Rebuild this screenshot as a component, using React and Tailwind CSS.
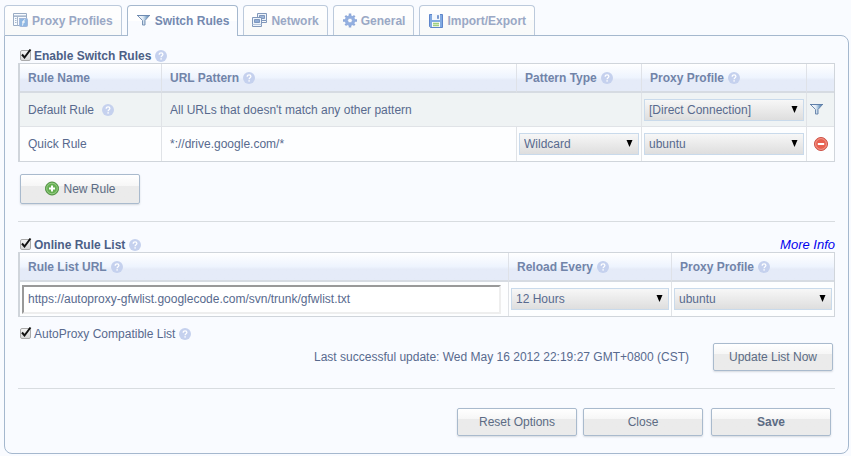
import { useState } from "react";

function HelpIcon() {
  return (
    <svg className="block size-3 shrink-0" viewBox="0 0 12 12" aria-label="Help" role="img">
      <circle cx="6" cy="6" r="6" fill="#c5d1ee" />
      <path d="M4.2 4.7C4.2 3.4 5 2.8 6.1 2.8S7.9 3.5 7.9 4.5C7.9 5.7 6.1 5.7 6.1 7.2" fill="none" stroke="#fff" strokeWidth="1.3" />
      <rect x="5.4" y="8.2" width="1.4" height="1.4" fill="#fff" />
    </svg>
  );
}

function ProfilesIcon() {
  return (
    <svg className="size-4 shrink-0" viewBox="0 0 16 16" aria-hidden="true">
      <path d="M.5 .5h13v12H.5z" fill="#f8fbff" stroke="#9aacc4" />
      <path d="M1 2.5h12" stroke="#c3cfdf" />
      <path d="M1 3.5h12M4.5 4v8.5M2 5.5h1.5M2 7.5h1.5M2 9.5h1.5M6 5.500h6" stroke="#a9b8cc" fill="none" />
      <rect x="6.500" y="5.500" width="8" height="8" rx="1" fill="#8fb7e2" stroke="#a3b8dc" />
      <path d="M12.200 6.800c-2.200-.2-1.700 2-2.700 5.700M9 9h3" stroke="#fff" fill="none" />
    </svg>
  );
}

function FunnelIcon({ dim }) {
  return (
    <svg className={"size-4 shrink-0 " + (dim ? "opacity-90" : "")} viewBox="0 0 16 16" aria-hidden="true">
      <defs>
        <linearGradient id="funnel" x1="0" x2="1">
          <stop offset="0" stopColor="#fdfeff" />
          <stop offset=".45" stopColor="#dfeaf4" />
          <stop offset=".75" stopColor="#7ba3c8" />
          <stop offset="1" stopColor="#4478a8" />
        </linearGradient>
      </defs>
      <path d="M1.500 2.500h12L9 7.500v4.500H6.500V7.500z" fill="url(#funnel)" stroke="#6d89ae" />
      <path d="M1 2.500h13" stroke="#5f7fa9" />
    </svg>
  );
}

function NetworkIcon() {
  return (
    <svg className="size-4 shrink-0" viewBox="0 0 16 16" aria-hidden="true">
      <path d="M5.500 .5h9v7h-9z" fill="#eef4fb" stroke="#8198bb" />
      <path d="M7.500 2.500h5v3h-5z" fill="#9db6da" stroke="#8198bb" />
      <path d="M10 9.500h4.500v-2" fill="none" stroke="#8198bb" />
      <path d="M.5 4.500h9v7h-9z" fill="#eef4fb" stroke="#8198bb" />
      <path d="M2.500 6.500h5v3h-5z" fill="#8fabd5" stroke="#7d97bd" />
      <path d="M.5 11.500v2h9v-2" fill="#eef4fb" stroke="#8198bb" />
    </svg>
  );
}

function GearIcon() {
  return (
    <svg className="size-4 shrink-0" viewBox="-1 0 16 16" aria-hidden="true">
      <g stroke="#8fa8d8" strokeWidth="2.500">
        <path d="M7 .5v14M0 7.500h14" />
        <path d="M2.300 2.800l9.400 9.400M11.700 2.800l-9.400 9.400" strokeWidth="2.200" />
      </g>
      <circle cx="7" cy="7.500" r="5.200" fill="#93afe0" />
      <circle cx="7" cy="7.500" r="2.300" fill="#fafbfd" stroke="#87a1d2" strokeWidth=".6" />
    </svg>
  );
}

function FloppyIcon() {
  return (
    <svg className="size-4 shrink-0" viewBox="-1 -1 16 16" aria-hidden="true">
      <path d="M.5 .5h13v13h-12l-1-1z" fill="#81aae2" stroke="#5f86cb" />
      <path d="M3 0h8v6H3z" fill="#f4f8fd" />
      <path d="M8.500 1.500h1v3h-1z" fill="#5f83bd" stroke="#7c9bcf" />
      <path d="M3 8h8v5H3z" fill="#fbfdfb" />
      <path d="M4 9.500h6M4 11.500h6" stroke="#9fd080" strokeWidth="1.300" />
    </svg>
  );
}

function AddIcon() {
  return (
    <svg className="size-4 shrink-0" viewBox="0 0 16 16" aria-hidden="true">
      <circle cx="8" cy="7.500" r="6.500" fill="#65ae51" stroke="#4c8d3d" />
      <circle cx="8" cy="7.500" r="5.300" fill="none" stroke="#a3d694" strokeWidth=".8" />
      <path d="M8 4.500v6M5 7.500h6" stroke="#fff" strokeWidth="2" />
    </svg>
  );
}

function RemoveIcon() {
  return (
    <svg className="size-4" viewBox="0 0 16 16" aria-hidden="true">
      <circle cx="8" cy="8" r="6.500" fill="#e8604f" stroke="#cc5146" />
      <circle cx="8" cy="8" r="5.400" fill="none" stroke="#f3a79c" strokeWidth=".8" />
      <path d="M4.800 8h6.400" stroke="#fff" strokeWidth="2" />
    </svg>
  );
}

const tabs = [
  { name: "Proxy Profiles", Icon: ProfilesIcon },
  { name: "Switch Rules", Icon: FunnelIcon },
  { name: "Network", Icon: NetworkIcon },
  { name: "General", Icon: GearIcon },
  { name: "Import/Export", Icon: FloppyIcon },
];

function Tab({ name, Icon, active, onSelect }) {
  const look = active
    ? "z-10 -mb-px h-[31px] border-[#a5b8ce] bg-linear-to-b from-white from-50% to-[#f9fbff] to-50% pb-px text-[#7489b0]"
    : "h-[30px] border-[#bccadc] bg-linear-to-b from-[#fefefe] from-50% to-[#f9fafa] to-50% text-[#9aa8c5]";
  return (
    <button
      type="button"
      role="tab"
      aria-selected={active}
      onClick={onSelect}
      className={"flex items-center gap-[3px] rounded-t border border-b-0 px-2 font-bold whitespace-nowrap " + look}
    >
      <Icon dim />
      {name}
    </button>
  );
}

function Check({ label, bold }) {
  const [on, setOn] = useState(true);
  return (
    <div className="flex h-[15px] items-center gap-1 pl-0.5">
      <label className={"flex items-center gap-[3px] " + (bold ? "font-bold text-[#4c5f86]" : "text-[#586a8e]")}>
        <span className="relative block h-[11px] w-[11px]">
          <input
            type="checkbox"
            checked={on}
            onChange={() => setOn(!on)}
            className="peer block size-[11px] appearance-none rounded-xs border border-[#aaa] bg-linear-to-b from-[#f4f4f4] to-[#d8d8d8]"
          />
          <svg className="pointer-events-none absolute -top-0.5 left-0 hidden h-3 w-3 peer-checked:block" viewBox="0 0 12 12" aria-hidden="true">
            <path d="M2 6.500L4.500 9.500L10.500 1.500" fill="none" stroke="#111" strokeWidth="2" />
          </svg>
        </span>
        {label}
      </label>
      <HelpIcon />
    </div>
  );
}

function Select({ label, options }) {
  return (
    <div className="relative">
      <select
        aria-label={label}
        className="block h-[22px] w-full appearance-none border border-[#c9daeb] bg-linear-to-b from-[#f7f7f7] to-[#dedede] pr-5 pl-1 text-[#586a8e]"
      >
        {options.map((o) => (
          <option key={o}>{o}</option>
        ))}
      </select>
      <svg className="pointer-events-none absolute top-[7px] right-1.5 h-[7px] w-[7px]" viewBox="0 0 7 7" aria-hidden="true">
        <path d="M.5 0h6L3.500 7z" fill="#000" />
      </svg>
    </div>
  );
}

function Head({ children, help }) {
  return (
    <th className="h-[29px] border-r border-b-2 border-r-[#dfe2e8] border-b-[#d6dbe2] bg-linear-to-b from-white via-[#eef4fe] via-50% to-[#e5ebf8] to-60% p-0 pl-2 text-left font-bold text-[#7184a9] last:border-r-0">
      <div className="flex items-center gap-1">
        {children}
        {help && <HelpIcon />}
      </div>
    </th>
  );
}

const cell = "border-r border-[#e0e3e7] p-0 last:border-r-0 ";
const tableLook = "w-full table-fixed border-separate border-spacing-0 border border-l-2 border-[#d0d5db] bg-[#fdfeff]";
const profiles = ["ubuntu", "[Direct Connection]"];

function Button({ children, tall, bold }) {
  return (
    <button
      type="button"
      className={
        "flex w-[120px] items-center justify-center gap-[3px] rounded-xs border border-[#a9bacd] bg-linear-to-b from-white via-[#f6f6f6] via-40% to-[#ebebeb] to-40% text-[#5c6b84] shadow-[0_1px_2px_#d5d9df] " +
        (tall ? "h-[30px] " : "h-7 ") +
        (bold ? "font-bold" : "")
      }
    >
      {children}
    </button>
  );
}

export default function App() {
  const [active, setActive] = useState("Switch Rules");
  return (
    <div className="min-h-screen bg-[#f9fbff] px-1 pt-[5px] pr-0.5 font-['Liberation_Sans',Arial,sans-serif] text-xs text-[#586a8e]">
      <div role="tablist" className="flex items-start gap-[5px]">
        {tabs.map((t) => (
          <Tab key={t.name} {...t} active={t.name === active} onSelect={() => setActive(t.name)} />
        ))}
      </div>

      <main className="rounded-b-lg rounded-tr-lg border border-[#a5b8ce] bg-[#f9fbff] px-[13px] pt-3 pb-[17px]">
        <Check label="Enable Switch Rules" bold />
        <table className={tableLook}>
          <colgroup>
            <col className="w-[142px]" />
            <col />
            <col className="w-[125px]" />
            <col className="w-[165px]" />
            <col className="w-[27px]" />
          </colgroup>
          <thead>
            <tr>
              <Head>Rule Name</Head>
              <Head help>URL Pattern</Head>
              <Head help>Pattern Type</Head>
              <Head help>Proxy Profile</Head>
              <Head />
            </tr>
          </thead>
          <tbody>
            <tr className="bg-[#eff3f4]">
              <td className={cell + "h-[34px] border-b pl-2"}>
                <div className="flex items-center gap-2">
                  Default Rule <HelpIcon />
                </div>
              </td>
              <td className={cell + "border-b pl-2"} colSpan={2}>
                All URLs that doesn't match any other pattern
              </td>
              <td className={cell + "border-b px-0.5"}>
                <Select label="Default proxy profile" options={["[Direct Connection]", "ubuntu"]} />
              </td>
              <td className={cell + "border-b pl-0.5"}>
                <FunnelIcon />
              </td>
            </tr>
            <tr>
              <td className={cell + "h-[34px] pl-2"}>Quick Rule</td>
              <td className={cell + "pl-2"}>*://drive.google.com/*</td>
              <td className={cell + "px-0.5"}>
                <Select label="Pattern type" options={["Wildcard", "RegExp"]} />
              </td>
              <td className={cell + "px-0.5"}>
                <Select label="Quick rule proxy profile" options={profiles} />
              </td>
              <td className={cell}>
                <button type="button" aria-label="Delete rule" className="mx-auto block">
                  <RemoveIcon />
                </button>
              </td>
            </tr>
          </tbody>
        </table>

        <div className="mt-3 pl-0.5">
          <Button tall>
            <AddIcon />
            New Rule
          </Button>
        </div>

        <hr className="mt-[17px] border-[#d8dce0]" />

        <div className="mt-[15px] flex items-center justify-between">
          <Check label="Online Rule List" bold />
          <a href="#more" className="text-[13px] leading-[15px] text-[#0000ee] italic">
            More Info
          </a>
        </div>
        <table className={tableLook}>
          <colgroup>
            <col />
            <col className="w-[163px]" />
            <col className="w-[162px]" />
          </colgroup>
          <thead>
            <tr>
              <Head help>Rule List URL</Head>
              <Head help>Reload Every</Head>
              <Head help>Proxy Profile</Head>
            </tr>
          </thead>
          <tbody>
            <tr>
              <td className={cell + "h-[34px] pr-[7px] pl-0.5"}>
                <input
                  type="text"
                  aria-label="Rule list URL"
                  defaultValue="https://autoproxy-gfwlist.googlecode.com/svn/trunk/gfwlist.txt"
                  className="block h-[29px] w-full border-2 border-t-[#999] border-r-[#eee] border-b-[#eee] border-l-[#999] bg-white pl-1 text-[#586a8e]"
                />
              </td>
              <td className={cell + "px-0.5"}>
                <Select label="Reload every" options={["12 Hours", "24 Hours"]} />
              </td>
              <td className={cell + "px-0.5"}>
                <Select label="Rule list proxy profile" options={profiles} />
              </td>
            </tr>
          </tbody>
        </table>

        <div className="mt-[9px]">
          <Check label="AutoProxy Compatible List" />
        </div>
        <div className="mt-0.5 flex items-center justify-end gap-6 pr-0.5">
          <p>Last successful update: Wed May 16 2012 22:19:27 GMT+0800 (CST)</p>
          <Button>Update List Now</Button>
        </div>

        <hr className="mt-[17px] border-[#d8dce0]" />

        <div className="mt-[19px] flex justify-end gap-2 pr-1">
          <div className="flex gap-1.5">
            <Button>Reset Options</Button>
            <Button>Close</Button>
          </div>
          <Button bold>Save</Button>
        </div>
      </main>
    </div>
  );
}
